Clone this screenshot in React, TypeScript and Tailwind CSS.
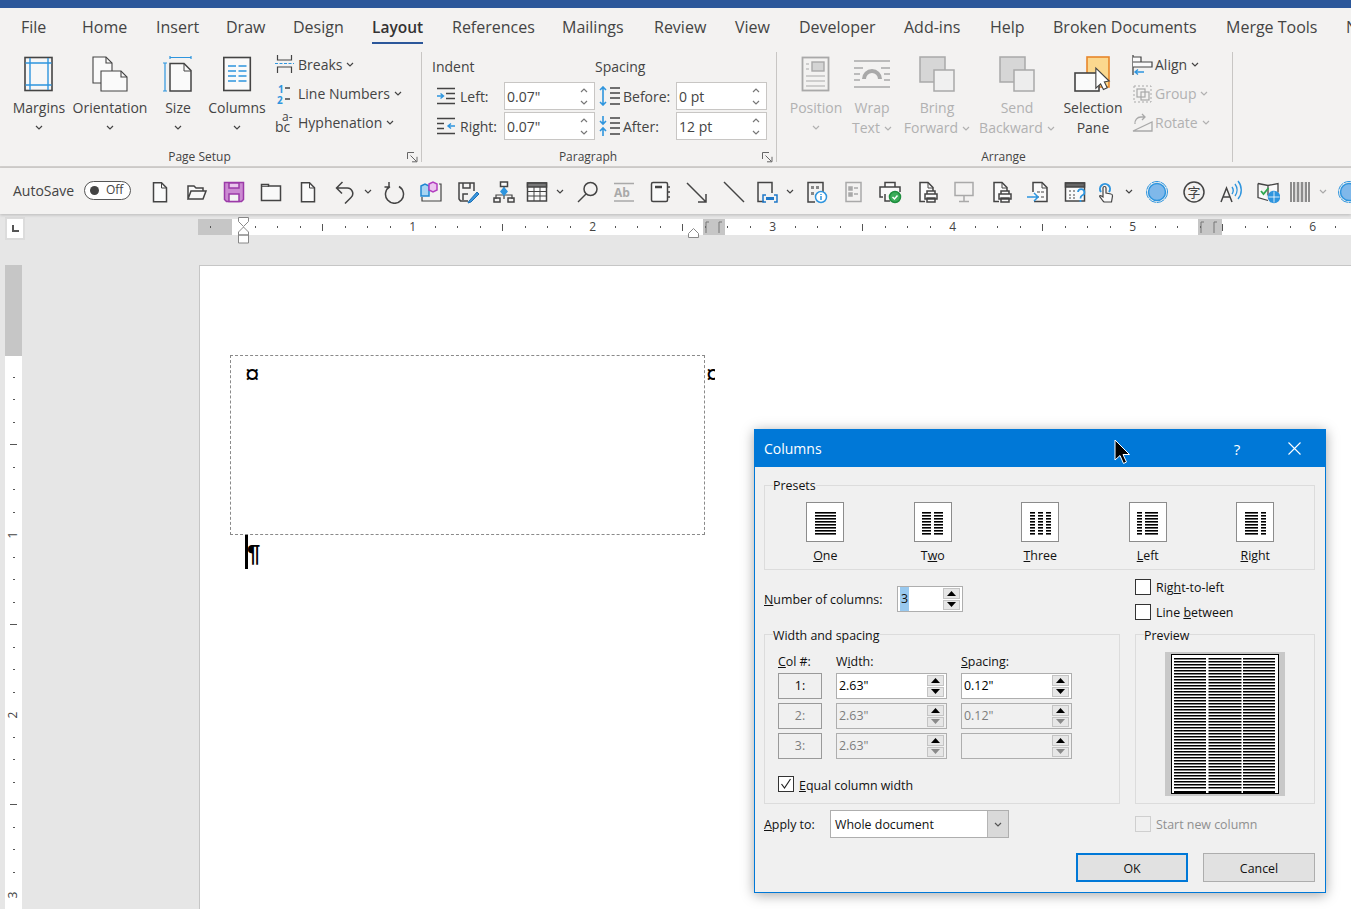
import React from "react";

const G = "#444444";
const B = "#2e95de";
const D = "#a9a9a9";

function Chev({c = G}: {c?: string}) {
  return (
    <svg width="8" height="5" viewBox="0 0 8 5" className="shrink-0">
      <path d="M1 1l3 3 3-3" fill="none" stroke={c} strokeWidth="1.2" />
    </svg>
  );
}

function Expander() {
  return (
    <svg width="11" height="11" viewBox="0 0 11 11" className="absolute right-[3px] bottom-[1px]">
      <path d="M.5 7V.5H7M3.5 3.5l6 6M5 9.8h5V4.8" fill="none" stroke="#666" />
    </svg>
  );
}

// ribbon big icons
const MarginsIcon = () => (
  <svg width="30" height="36" viewBox="0 0 30 36" fill="none">
    <rect x="1" y="1.5" width="27" height="33" fill="#f7f7f7" stroke={G} strokeWidth="1.6" />
    <path d="M6 2v32M24 2v32M1.5 7h26M1.5 29h26" stroke={B} strokeWidth="1.4" />
  </svg>
);
const OrientationIcon = () => (
  <svg width="36" height="36" viewBox="0 0 36 36" fill="none" stroke={G} strokeWidth="1.1">
    <path d="M1 1h13l6 6v20H1z" fill="#fafafa" />
    <path d="M14 1v6h6" />
    <path d="M9 15h20l6 6v14H9z" fill="#fafafa" />
    <path d="M29 15v6h6" />
  </svg>
);
const SizeIcon = () => (
  <svg width="30" height="36" viewBox="0 0 30 36" fill="none">
    <path d="M7 1.5h21M7 0v3M28 0v3M2 7v28M0 7h4M0 35h4" stroke={B} strokeWidth="1.2" />
    <path d="M7 7.5h14l7 7V35H7z" fill="#fafafa" stroke={G} strokeWidth="1.5" />
    <path d="M21 8v7h7" stroke={G} />
  </svg>
);
const ColumnsIcon = () => (
  <svg width="30" height="36" viewBox="0 0 30 36" fill="none">
    <rect x="1.8" y="1.5" width="26.5" height="33" fill="#fafafa" stroke={G} strokeWidth="1.6" />
    <path d="M6 10h8M16.5 10h8M6 15h8M16.5 15h8M6 20h8M16.5 20h8M6 25h8M16.5 25h8" stroke={B} strokeWidth="1.5" />
  </svg>
);
const BreaksIcon = () => (
  <svg width="19" height="19" viewBox="0 0 19 19" fill="none" stroke={G} strokeWidth="1.2">
    <path d="M2.5 0v5h14V0M2.5 18v-6h14v6" />
    <path d="M0 8.5h19" stroke={B} strokeDasharray="3 1.5" />
  </svg>
);
const LineNumbersIcon = () => (
  <svg width="19" height="24" viewBox="0 0 19 24" className="overflow-visible">
    <text x="3" y="11" fontSize="10" fontWeight="700" fill={B} fontFamily="'Open Sans',sans-serif">1</text>
    <text x="2" y="22" fontSize="10" fontWeight="700" fill={B} fontFamily="'Open Sans',sans-serif">2</text>
    <path d="M10 6h5M10 17h5" stroke={G} strokeWidth="1.3" />
  </svg>
);
const HyphenationIcon = () => (
  <svg width="19" height="24" viewBox="0 0 19 24" className="overflow-visible">
    <text x="7" y="10" fontSize="12" fill={G} fontFamily="'Open Sans',sans-serif">a-</text>
    <text x="0" y="21" fontSize="14" fill={G} fontFamily="'Open Sans',sans-serif">bc</text>
  </svg>
);
const PositionIcon = () => (
  <svg width="30" height="36" viewBox="0 0 30 36" fill="none" stroke={D}>
    <rect x="1.5" y="1.5" width="26" height="33" fill="#f3f2f1" strokeWidth="1.8" />
    <rect x="11" y="6" width="12" height="9" strokeWidth="1.4" fill="#d4d4d4" />
    <path d="M5 8h3M5 13h3M5 20h19M5 25h19M5 30h19" />
  </svg>
);
const WrapIcon = () => (
  <svg width="36" height="30" viewBox="0 0 36 30" fill="none" stroke={D}>
    <path d="M0 2h36M0 28h36M0 9h9M27 9h9M0 15h6M30 15h6M0 21h6M30 21h6" strokeWidth="1.3" />
    <path d="M10 20a8 8 0 0 1 16 0" strokeWidth="4" />
  </svg>
);
const StackIcon = ({back, front}: {back: string; front: string}) => (
  <svg width="36" height="36" viewBox="0 0 36 36" stroke={D} strokeWidth="1.5">
    <rect x="1" y="1" width="25" height="25" fill={back} />
    <rect x="15" y="14" width="20" height="21" fill={front} />
  </svg>
);
const SelectionIcon = () => (
  <svg width="38" height="36" viewBox="0 0 38 36">
    <rect x="13" y="1" width="22" height="30" fill="#fbd88e" stroke="#e8862a" strokeWidth="1.6" />
    <rect x="1" y="17" width="24" height="18" fill="#fafafa" stroke={G} strokeWidth="1.6" />
    <path d="M23 16v21l5-4.500 3 6 4-2-3-6 5-1z" fill="#fff" stroke={G} strokeWidth="1.2" transform="translate(0 -3) scale(.95)" />
  </svg>
);
const AlignIcon = () => (
  <svg width="21" height="20" viewBox="0 0 21 20" fill="none">
    <path d="M1 0v20" stroke={G} strokeWidth="1.3" />
    <path d="M1 2h8v5H1M1 7h19v5H1" stroke={G} fill="#fafafa" strokeWidth="1.2" />
    <path d="M3 17h9M6 14.500L3 17l3 2.500" stroke={B} strokeWidth="1.4" />
  </svg>
);
const GroupIcon = () => (
  <svg width="21" height="20" viewBox="0 0 21 20" fill="none" stroke={D}>
    <rect x="2" y="2" width="17" height="16" strokeDasharray="2 2" />
    <rect x="5" y="5" width="8" height="8" strokeWidth="1.2" />
    <rect x="9" y="8" width="8" height="8" strokeWidth="1.2" />
  </svg>
);
const RotateIcon = () => (
  <svg width="21" height="20" viewBox="0 0 21 20" fill="none" stroke={D} strokeWidth="1.3">
    <path d="M1 18h19V9zM3 11a6 6 0 0 1 6-7h4M10 1l3 3-3 3" />
  </svg>
);
const IndentIcon = ({flip}: {flip?: boolean}) => (
  <svg width="18" height="18" viewBox="0 0 18 18" fill="none">
    {flip
      ? <path d="M0 1.500h18M0 6.500h7M0 11.500h7M0 16.500h18" stroke={G} strokeWidth="1.5" />
      : <path d="M0 1.500h18M9 6.500h9M9 11.500h9M0 16.500h18" stroke={G} strokeWidth="1.5" />}
    {flip
      ? <path d="M11 9h7M14 6.500L11 9l3 2.500" stroke={B} strokeWidth="1.400" />
      : <path d="M0 9h6M3.500 6.500L6.500 9l-3 2.500" stroke={B} strokeWidth="1.400" />}
  </svg>
);
const SpacingIcon = ({after}: {after?: boolean}) => (
  <svg width="22" height="20" viewBox="0 0 22 20" fill="none">
    <path d="M12 2h10M12 7h10M12 12h10M12 18h10" stroke={G} strokeWidth="1.500" />
    {after
      ? <path d="M5 0v8M2 5l3 3 3-3M5 12v8M2 15l3-3 3 3" stroke={B} strokeWidth="1.600" />
      : <path d="M5 1v18M2 4l3-3 3 3M2 16l3 3 3-3" stroke={B} strokeWidth="1.600" />}
  </svg>
);

// quick access toolbar icons
const Q = ({children, s = G}: {children: React.ReactNode; s?: string}) => (
  <svg width="24" height="24" viewBox="0 0 24 24" fill="none" stroke={s} strokeWidth="1.5">{children}</svg>
);
const Page = ({s = G}: {s?: string}) => (
  <>
    <path d="M5.500 2.800h8l5 5v14h-13z" fill="#fafafa" stroke={s} />
    <path d="M13.500 3v5h5" stroke={s} strokeWidth="1" />
  </>
);
const qatItems: {icon: React.ReactNode; cn?: string; chev?: string}[] = [
  {icon: <Q><Page /></Q>},
  {icon: <Q><path d="M3 19V6h6l2 2h7v3M3 19l3-8h15l-3 8z" fill="#fafafa" /></Q>},
  {icon: <Q s="#9b3aa8"><path d="M2.500 2.500h19v17l-2 2h-15l-2-2z" fill="#cb8ad2" /><rect x="7" y="3" width="10" height="5" fill="#e9c7ed" /><rect x="7" y="14" width="10" height="7.500" fill="#f4f4f4" /></Q>},
  {icon: <Q><path d="M2.500 20.500V4.500h7v1.500h12v14.500z" fill="#f9f9f9" /><path d="M3 6.300h7" strokeWidth="1" /></Q>},
  {icon: <Q><Page /></Q>},
  {icon: <Q><path d="M4 8h10a5.500 5.500 0 0 1 4 9.500l-6 6M9.500 2L3.500 8l5.500 5.500" /></Q>, chev: "w-[12px]"},
  {icon: <Q><path d="M8 5.500a9 9 0 1 0 9 0M7 1v5H2.500" transform="translate(0 1)" /></Q>},
  {icon: <Q><path d="M20 4h2v17H3v-4" strokeWidth="1.200" /><path d="M2 6l4-2 4 2v10H2z" fill="#a8d4f2" stroke="#1f86d2" /><path d="M10 4l4-2 4 2v6l-4 2-4-2z" fill="#ecc4ef" stroke="#b33fc0" /></Q>},
  {icon: <Q><path d="M12 21H4.500L3 19V3h15v8M7 3v5h7V3M7 20v-6h5" /><path d="M13 21l8-9 2 2-8 8-3 1z" fill="#3a96dd" stroke="#1b6fb5" strokeWidth="1" /></Q>},
  {icon: <Q><rect x="8.500" y="2" width="7" height="4.500" fill="#fafafa" /><path d="M12 7v3M4 19v-4h16v4M12 14v5" strokeWidth="1.200" /><rect x="2" y="18" width="6" height="4" /><rect x="16" y="18" width="6" height="4" /><path d="M12 8l3 3.500-3 3.500-3-3.500z" fill={B} stroke={B} /></Q>, cn: "-ml-[1px]"},
  {icon: <Q><rect x="2.500" y="3" width="19" height="18" fill="#fafafa" /><path d="M2.500 3h19v4h-19z" fill="#777" /><path d="M9 7v14M15 7v14M3 11.500h18M3 16h18" strokeWidth="1" /></Q>, cn: "-ml-[4px]", chev: "w-[14px]"},
  {icon: <Q><circle cx="14.500" cy="9" r="6.500" /><path d="M10 14l-8 8" /></Q>},
  {icon: <Q s={D}><path d="M2 3.500h20M2 21h20" /><text x="2" y="17" fontSize="12" fontWeight="700" fill={D} stroke="none" fontFamily="'Open Sans',sans-serif">Ab</text></Q>, cn: "-ml-[1px]"},
  {icon: <Q><rect x="3.500" y="2.500" width="16" height="19" rx="1.500" fill="#fafafa" /><path d="M7 7h7" strokeWidth="2.500" /><path d="M21 6v2M21 11v2M21 16v2" /></Q>, cn: "-ml-[1px]"},
  {icon: <Q><path d="M2 3l19 19M21 14v8h-8" /></Q>},
  {icon: <Q><path d="M2 2l20 20" /></Q>},
  {icon: <Q><path d="M9 21.500H3V2.500h14V13" /><path d="M11 15H8v7h3M19 15h3v7h-3" stroke="#1f78c8" /><rect x="11" y="17" width="8" height="3" fill="#1f78c8" stroke="none" /></Q>, cn: "-ml-[4px]", chev: "w-[12px]"},
  {icon: <Q><path d="M11 22H4V2.500h15V12" /><path d="M7 6h3v3H7zM7 12h3v3H7zM12 6h3v3h-3z" fill="#888" stroke="none" /><circle cx="17" cy="17" r="5.500" fill="#fff" stroke={B} /><path d="M17 14v1M17 16v4" stroke={B} /></Q>},
  {icon: <Q s={D}><rect x="5" y="2.500" width="15" height="19" /><path d="M8 7h3v3H8zM8 13h3v3H8zM13 8h4M13 14h4" fill={D} /></Q>},
  {icon: <Q><path d="M7 7V2.500h10V7M5 17H2V7h20v5M7 14v7h5" fill="#fafafa" /><circle cx="17" cy="17" r="5.500" fill="#3bad5a" stroke="#1e8e3e" /><path d="M14.500 17l2 2 3-3.500" stroke="#fff" /></Q>},
  {icon: <Q><path d="M10 21.500H5v-19h8l5 5v4" fill="#fafafa" /><path d="M13 3v5h5" strokeWidth="1" /><path d="M12 14v-3h8v3M10 14h12v5H10zM12 18h8v4h-8z" fill="#fafafa" /></Q>},
  {icon: <Q s={D}><rect x="3" y="2.500" width="18" height="13" /><path d="M12 16v5M7 21.500h10" /></Q>},
  {icon: <Q><path d="M10 21.500H5v-19h8l5 5v4" fill="#fafafa" /><path d="M13 3v5h5" strokeWidth="1" /><path d="M12 14v-3h8v3M10 14h12v5H10zM12 18h8v4h-8z" fill="#fafafa" /></Q>},
  {icon: <Q><path d="M7 12V2.500h9l5 5v14H8" fill="#fafafa" /><path d="M16 3v5h5" strokeWidth="1" /><path d="M11 12h3M15 12h3M11 17h2M15 17h3" strokeWidth="1.200" /><path d="M1 17h11M8 13l4 4-4 4" stroke={B} /></Q>},
  {icon: <Q><rect x="2.500" y="3" width="19" height="18" fill="#fafafa" /><path d="M2.500 3h19v4h-19z" fill="#666" /><path d="M6 11h2M10 11h2M6 15h2M10 15h2M6 18h2M10 18h2" strokeWidth="1.200" /><path d="M15 12a3.200 3.200 0 1 1 4 3.500c-1 .5-1.500 1-1.500 3M17.500 20v2" stroke={B} fill="#fafafa" strokeWidth="1.800" /></Q>},
  {icon: <Q><path d="M7 12a5 5 0 1 1 8 0" stroke={B} strokeWidth="2" /><path d="M9 21l-3-4c-1-1 0-2 1.500-1l1.500 1V8c0-2 3-2 3 0v5l5 1c1 0 1.500 1 1.500 2l-1 6H10z" fill="#fafafa" strokeWidth="1.200" /></Q>, chev: "w-[14px]", cn: "-ml-[6px]"},
  {icon: <Q s={B}><circle cx="12" cy="12" r="10.500" strokeWidth="1" strokeDasharray="8 .8" /><circle cx="12" cy="12" r="8.500" fill="#7fb8ea" strokeWidth="1.500" /></Q>},
  {icon: <svg width="24" height="24" viewBox="0 0 24 24" fill="none"><circle cx="12" cy="12" r="10" stroke={G} strokeWidth="1.500" /><text x="12" y="17" fontSize="13" textAnchor="middle" fill={G} fontFamily="'Noto Sans CJK SC',sans-serif">字</text></svg>},
  {icon: <Q><path d="M2 22l5.500-14L13 22M4 17h7" /><path d="M14 7a6 6 0 0 1 0 7M17 4a10 10 0 0 1 0 12M20 1a14 14 0 0 1 0 18" stroke={B} strokeWidth="1.400" transform="translate(-1 0)" /></Q>},
  {icon: <Q><path d="M2 3.500l10 2 10-2v9M12 5.500v10M2 3.500v14l10 3" fill="#fafafa" strokeWidth="1.300" /><path d="M5 11l2.500 3 5-6" stroke="#2fa84f" strokeWidth="1.800" /><circle cx="18" cy="17" r="5.500" fill={B} stroke={B} /><path d="M12.500 17h11M18 11.500v11" stroke="#fff" strokeWidth=".8" /></Q>},
  {icon: <Q s="#8c8c8c"><path d="M3 2v20M6 2v20M10 2v20M14 2v20M18 2v20M21 2v20" strokeWidth="2" /><path d="M8 2v20M12 2v20M16 2v20" strokeWidth="1" stroke="#bbb" /></Q>, chev: "w-[12px]", cn: "-ml-[5px]"},
  {icon: <Q s={B}><circle cx="12" cy="12" r="10.500" strokeWidth="1" strokeDasharray="8 .8" /><circle cx="12" cy="12" r="8.500" fill="#7fb8ea" strokeWidth="1.500" /></Q>},
];

const tabs: [string, string][] = [
  ["File", "w-[61px]"], ["Home", "w-[74px]"], ["Insert", "w-[70px]"], ["Draw", "w-[67px]"], ["Design", "w-[79px]"],
  ["Layout", "w-[80px]"], ["References", "w-[110px]"], ["Mailings", "w-[92px]"], ["Review", "w-[81px]"], ["View", "w-[64px]"],
  ["Developer", "w-[105px]"], ["Add-ins", "w-[86px]"], ["Help", "w-[63px]"], ["Broken Documents", "w-[173px]"], ["Merge Tools", "w-[120px]"], ["N", "w-[20px]"],
];

function BigButton({icon, lines, cn, off, chevInline}: {icon: React.ReactNode; lines: string[]; cn: string; off?: boolean; chevInline?: boolean}) {
  const c = off ? "#b1b1b1" : G;
  return (
    <div className={`flex flex-col items-center text-[14px] leading-5 ${off ? "text-[#b1b1b1]" : "text-[#444]"} ${cn}`}>
      <div className="h-[36px] mb-[6px] flex items-center justify-center">{icon}</div>
      {lines.map((l, i) => (
        <div key={l} className="whitespace-nowrap flex items-center gap-[4px]">
          {l}
          {chevInline && i === lines.length - 1 && <Chev c={c} />}
        </div>
      ))}
      {lines.length === 1 && <div className="h-[19px] flex items-center"><Chev c={c} /></div>}
    </div>
  );
}

function SmallRow({icon, label, off}: {icon: React.ReactNode; label: string; off?: boolean}) {
  return (
    <div className={`h-[29px] flex items-center text-[14px] whitespace-nowrap ${off ? "text-[#b1b1b1]" : "text-[#444]"}`}>
      <div className="w-[21px] flex items-center justify-start mr-[2px]">{icon}</div>
      {label}
      <span className="ml-[4px]"><Chev c={off ? "#b1b1b1" : G} /></span>
    </div>
  );
}

function RibbonInput({value}: {value: string}) {
  return (
    <div className="w-[91px] h-[28px] border border-[#c8c6c4] bg-white flex items-center pl-[2px] pr-[6px] text-[14px] text-[#444]">
      <span className="flex-1">{value}</span>
      <div className="flex flex-col gap-[7px]">
        <span className="rotate-180 flex"><Chev c="#777" /></span>
        <Chev c="#777" />
      </div>
    </div>
  );
}

function Ruler() {
  const ticks = Array.from({length: 52}, (_, i) => i - 1);
  return (
    <div className="relative h-[16px] mt-[5px] flex-1 bg-white overflow-visible">
      <div className="absolute left-0 top-0 h-[16px] w-[34px] bg-[#c6c6c6]" />
      <div className="absolute left-[505px] top-0 h-[16px] w-[22px] bg-[#c6c6c6]" />
      <div className="absolute left-[1000px] top-0 h-[16px] w-[24px] bg-[#c6c6c6]" />
      <div className="absolute left-[1px] top-0 h-[16px] flex items-center text-[12px] text-[#444] leading-none">
        {ticks.map(k => (
          <div key={k} className="w-[22.5px] shrink-0 flex items-center justify-center">
            {k === 0 ? null : k % 8 === 0 ? <span>{k / 8}</span> : k % 4 === 0 ? <div className="w-px h-[7px] bg-[#555]" /> : <div className="w-px h-[2px] bg-[#555]" />}
          </div>
        ))}
      </div>
      {/* indent markers */}
      <svg width="13" height="29" viewBox="0 0 13 29" className="absolute left-[39px] -top-[2px]" fill="#fff" stroke="#888">
        <path d="M1.500.5h10v4l-5 5-5-5zM6.500 10l5 5v3h-10v-3zM1.500 18h10v8h-10z" />
      </svg>
      <svg width="13" height="11" viewBox="0 0 13 11" className="absolute left-[489px] top-[9px]" fill="#fff" stroke="#888">
        <path d="M6.500.5l5 5v4h-10v-4z" />
      </svg>
      <svg width="20" height="12" viewBox="0 0 20 12" className="absolute left-[507px] top-[2px]" fill="none" stroke="#777">
        <path d="M1 12V1h3M14 12V1h3" />
      </svg>
      <svg width="20" height="12" viewBox="0 0 20 12" className="absolute left-[1002px] top-[2px]" fill="none" stroke="#777">
        <path d="M1 12V1h3M14 12V1h3" />
      </svg>
    </div>
  );
}

function VRuler() {
  const ticks = Array.from({length: 25}, (_, i) => i + 1);
  return (
    <div className="ml-[5px] w-[17px] h-full flex flex-col bg-white overflow-hidden">
      <div className="h-[91px] shrink-0 bg-[#c6c6c6]" />
      <div className="h-[10px] shrink-0" />
      {ticks.map(k => (
        <div key={k} className="h-[22.5px] shrink-0 flex items-center justify-center text-[12px] text-[#444] leading-none">
          {k % 8 === 0 ? <span className="-rotate-90">{k / 8}</span> : k % 4 === 0 ? <div className="w-[7px] h-px bg-[#555]" /> : <div className="w-[2px] h-px bg-[#555]" />}
        </div>
      ))}
    </div>
  );
}

const Tri = ({down, c = "#000"}: {down?: boolean; c?: string}) => (
  <svg width="9" height="5" viewBox="0 0 9 5"><path d={down ? "M0 0h9L4.500 5z" : "M4.500 0L9 5H0z"} fill={c} /></svg>
);

function SpinButtons({dim}: {dim?: boolean}) {
  return (
    <div className="w-[20px] h-full flex flex-col gap-[1px] py-[1px] pl-[1px] pr-[2px] shrink-0">
      <div className="flex-1 bg-[#e6e6e6] border border-[#c4c4c4] flex items-center justify-center"><Tri /></div>
      <div className="flex-1 bg-[#e6e6e6] border border-[#c4c4c4] flex items-center justify-center"><Tri down c={dim ? "#8a8a8a" : "#000"} /></div>
    </div>
  );
}

function DlgSpin({value, off}: {value: string; off?: boolean}) {
  return (
    <div className={`h-[26px] w-[111px] border border-[#aeaeae] flex items-stretch ${off ? "bg-[#f0f0f0]" : "bg-white"}`}>
      <span className={`flex-1 pl-[2px] flex items-center ${off ? "text-[#7d7d7d]" : "text-black"}`}>{value}</span>
      <SpinButtons dim={off} />
    </div>
  );
}

function ColBtn({n, off}: {n: string; off?: boolean}) {
  return <div className={`h-[26px] border border-[#9a9a9a] bg-[#f0f0f0] flex items-center justify-center ${off ? "text-[#7d7d7d]" : "text-black"}`}>{n}</div>;
}

function Check({checked, off}: {checked?: boolean; off?: boolean}) {
  return (
    <div className={`w-[16px] h-[16px] border flex items-center justify-center shrink-0 ${off ? "border-[#cfcfcf] bg-[#f0f0f0]" : "border-[#333] bg-white"}`}>
      {checked && <svg width="12" height="12" viewBox="0 0 12 12" fill="none" stroke="#222" strokeWidth="1.200"><path d="M1.500 6l3 4 6-9" /></svg>}
    </div>
  );
}

function PresetLines({cols}: {cols: [number, number][]}) {
  const ys = Array.from({length: 8}, (_, i) => i * 3);
  return (
    <svg width="21" height="23" viewBox="0 0 21 23">
      {ys.map(y => cols.map(([x, w]) => <rect key={`${x}-${y}`} x={x} y={y} width={w} height="1.600" fill="#000" />))}
    </svg>
  );
}

const presets: {cols: [number, number][]; pre: string; u: string; post: string}[] = [
  {cols: [[0, 21]], pre: "", u: "O", post: "ne"},
  {cols: [[0, 9], [12, 9]], pre: "T", u: "w", post: "o"},
  {cols: [[0, 5], [8, 5], [16, 5]], pre: "", u: "T", post: "hree"},
  {cols: [[0, 5], [8, 13]], pre: "", u: "L", post: "eft"},
  {cols: [[0, 13], [16, 5]], pre: "", u: "R", post: "ight"},
];

function PreviewDoc() {
  const ys = Array.from({length: 44}, (_, i) => 6 + i * 3);
  return (
    <svg width="120" height="144" viewBox="0 0 120 144">
      <rect width="120" height="144" fill="#c8c8c8" />
      <rect x="6.500" y="2.500" width="107" height="139" fill="#fff" stroke="#000" />
      {ys.map(y => (
        <g key={y} fill="#000">
          <rect x="9" y={y} width="32" height="1.500" />
          <rect x="43.500" y={y} width="33" height="1.500" />
          <rect x="78" y={y} width="32" height="1.500" />
        </g>
      ))}
      <rect x="9" y="139" width="32" height="2" />
      <rect x="43.500" y="139" width="33" height="2" />
      <rect x="78" y="139" width="32" height="2" />
    </svg>
  );
}

function ColumnsDialog() {
  return (
    <div className="absolute left-[754px] top-[429px] w-[572px] h-[464px] bg-[#f0f0f0] border border-[#0078d7] shadow-[0_2px_12px_rgba(0,0,0,0.35)] text-[12.4px] leading-4 text-[#111] font-['Open_Sans',sans-serif]">
      <div className="h-[37px] bg-[#0078d7] flex items-center pl-[9px] text-white text-[14px]">
        <span className="flex-1">Columns</span>
        <span className="w-[20px] text-center mr-[41px] text-[15px]">?</span>
        <svg width="13" height="13" viewBox="0 0 13 13" className="mr-[24px]" stroke="#fff" strokeWidth="1.100"><path d="M.5.5l12 12M12.500.5l-12 12" /></svg>
      </div>
      <div className="pl-[9px] pr-[10px] pt-[10px]">
        <fieldset className="h-[93px] border border-[#dcdcdc]">
          <legend className="ml-[8px] h-[16px] leading-[18px]">Presets</legend>
          <div className="flex pl-[6.500px] pt-[9px]">
            {presets.map(p => (
              <div key={p.u + p.post} className="w-[107.5px] flex flex-col items-center">
                <div className="w-[38px] h-[40px] bg-white border border-[#8c8c8c] flex items-center justify-center pt-[2px]">
                  <PresetLines cols={p.cols} />
                </div>
                <div className="mt-[6px]">{p.pre}<u>{p.u}</u>{p.post}</div>
              </div>
            ))}
          </div>
        </fieldset>
        <div className="flex">
          <div className="w-[356px] shrink-0">
            <div className="mt-[16px] flex items-center h-[26px]">
              <div className="w-[133px] mt-[2px]"><u>N</u>umber of columns:</div>
              <div className="w-[66px] h-[26px] border border-[#aeaeae] bg-white flex items-stretch">
                <div className="flex-1 flex pl-[2px]"><span className="bg-[#99c9ef] px-px flex items-center">3</span></div>
                <SpinButtons />
              </div>
            </div>
            <fieldset className="mt-[14px] h-[178px] border border-[#dcdcdc]">
              <legend className="ml-[8px] h-[16px] leading-[20px]">Width and spacing</legend>
              <div className="pl-[13px] pt-[11px]">
                <div className="grid grid-cols-[44px_111px_111px] gap-x-[14px] gap-y-[4px]">
                  <div className="h-[16px] leading-[18px]"><u>C</u>ol #:</div>
                  <div className="h-[16px] leading-[18px]">W<u>i</u>dth:</div>
                  <div className="h-[16px] leading-[18px]"><u>S</u>pacing:</div>
                  <ColBtn n="1:" />
                  <DlgSpin value={'2.63"'} />
                  <DlgSpin value={'0.12"'} />
                  <ColBtn n="2:" off />
                  <DlgSpin value={'2.63"'} off />
                  <DlgSpin value={'0.12"'} off />
                  <ColBtn n="3:" off />
                  <DlgSpin value={'2.63"'} off />
                  <DlgSpin value="" off />
                </div>
                <div className="mt-[17px] flex items-center gap-[5px] h-[16px]">
                  <Check checked />
                  <span className="mt-[4px]"><u>E</u>qual column width</span>
                </div>
              </div>
            </fieldset>
            <div className="mt-[6px] flex items-center h-[28px]">
              <div className="w-[66px] mt-[2px]"><u>A</u>pply to:</div>
              <div className="w-[179px] h-[28px] border border-[#aeaeae] bg-white flex items-stretch">
                <span className="flex-1 pl-[4px] pt-[2px] flex items-center">Whole document</span>
                <div className="w-[21px] bg-[#d9d9d9] border-l border-[#b5b5b5] flex items-center justify-center"><Chev c="#555" /></div>
              </div>
            </div>
          </div>
          <div className="ml-[15px] w-[180px] shrink-0">
            <div className="mt-[9px] flex items-center gap-[5px] h-[16px]"><Check /><span className="mt-[2px]">Rig<u>h</u>t-to-left</span></div>
            <div className="mt-[9px] flex items-center gap-[5px] h-[16px]"><Check /><span className="mt-[2px]">Line <u>b</u>etween</span></div>
            <fieldset className="mt-[6px] h-[178px] border border-[#dcdcdc]">
              <legend className="ml-[8px] h-[16px] leading-[20px]">Preview</legend>
              <div className="pl-[29px] pt-[10px]"><PreviewDoc /></div>
            </fieldset>
            <div className="mt-[12px] flex items-center gap-[5px] h-[16px] text-[#8f8f8f]"><Check off /><span className="mt-[2px]">Start new column</span></div>
          </div>
        </div>
        <div className="mt-[15px] flex justify-end gap-[15px]">
          <div className="w-[112px] h-[29px] border-2 border-[#0078d7] bg-[#e1e1e1] pt-[2px] flex items-center justify-center">OK</div>
          <div className="w-[112px] h-[29px] border border-[#adadad] bg-[#e1e1e1] pt-[2px] flex items-center justify-center">Cancel</div>
        </div>
      </div>
      <svg width="16" height="26" viewBox="0 0 16 26" className="absolute left-[359px] top-[9px]">
        <path d="M1 1v20l5-4.500 3.500 8 3-1.500-3.500-7.500h6.500z" fill="#000" stroke="#fff" />
      </svg>
    </div>
  );
}

export default function App() {
  return (
    <div className="relative w-[1351px] h-[909px] overflow-hidden flex flex-col bg-[#e6e6e6] font-['Open_Sans',sans-serif]">
      <div className="h-[8px] bg-[#2b579a] shrink-0" />
      {/* tabs */}
      <div className="h-[36px] shrink-0 bg-[#f3f2f1] flex pl-[21px] text-[16px] text-[#444] overflow-hidden">
        {tabs.map(([t, w]) => (
          <div key={t} className={`${w} shrink-0 pt-[7px] whitespace-nowrap`}>
            {t === "Layout"
              ? <span className="inline-block h-[29px] border-b-[3px] border-[#2b579a] font-semibold text-[#333] text-[15.500px]">{t}</span>
              : t}
          </div>
        ))}
      </div>
      {/* ribbon */}
      <div className="h-[124px] shrink-0 bg-[#f3f2f1] border-b-2 border-[#d2d0ce] flex pt-[6px]">
        <div className="relative w-[421px] h-[114px] flex flex-col">
          <div className="h-[98px] flex pl-[12px] pt-[6px]">
            <BigButton icon={<MarginsIcon />} lines={["Margins"]} cn="w-[54px]" />
            <BigButton icon={<OrientationIcon />} lines={["Orientation"]} cn="w-[88px]" />
            <BigButton icon={<SizeIcon />} lines={["Size"]} cn="w-[48px]" />
            <BigButton icon={<ColumnsIcon />} lines={["Columns"]} cn="w-[70px]" />
            <div className="ml-[3px] -mt-[6px]">
              <SmallRow icon={<BreaksIcon />} label="Breaks" />
              <SmallRow icon={<LineNumbersIcon />} label="Line Numbers" />
              <SmallRow icon={<HyphenationIcon />} label="Hyphenation" />
            </div>
          </div>
          <div className="h-[16px] text-center text-[12px] leading-[18px] text-[#444] pr-[22px]">Page Setup</div>
          <Expander />
        </div>
        <div className="w-px h-[110px] mt-[2px] bg-[#c8c6c4]" />
        <div className="relative w-[354px] h-[114px] flex flex-col">
          <div className="h-[98px] flex text-[14px] text-[#444]">
            <div className="w-[173px] shrink-0">
              <div className="h-[31px] pt-[7px] pl-[10px] leading-5">Indent</div>
              <div className="flex items-center h-[30px]">
                <div className="ml-[15px] w-[18px] flex"><IndentIcon /></div>
                <div className="ml-[5px] w-[44px]">Left:</div>
                <RibbonInput value={'0.07"'} />
              </div>
              <div className="flex items-center h-[30px]">
                <div className="ml-[15px] w-[18px] flex"><IndentIcon flip /></div>
                <div className="ml-[5px] w-[44px]">Right:</div>
                <RibbonInput value={'0.07"'} />
              </div>
            </div>
            <div className="flex-1">
              <div className="h-[31px] pt-[7px] leading-5">Spacing</div>
              <div className="flex items-center h-[30px]">
                <div className="ml-[3px] w-[22px] flex"><SpacingIcon /></div>
                <div className="ml-[3px] w-[53px]">Before:</div>
                <RibbonInput value="0 pt" />
              </div>
              <div className="flex items-center h-[30px]">
                <div className="ml-[3px] w-[22px] flex"><SpacingIcon after /></div>
                <div className="ml-[3px] w-[53px]">After:</div>
                <RibbonInput value="12 pt" />
              </div>
            </div>
          </div>
          <div className="h-[16px] text-center text-[12px] leading-[18px] text-[#444] pr-[22px]">Paragraph</div>
          <Expander />
        </div>
        <div className="w-px h-[110px] mt-[2px] bg-[#c8c6c4]" />
        <div className="w-[455px] h-[114px] flex flex-col">
          <div className="h-[98px] flex pl-[9px] pt-[6px]">
            <BigButton icon={<PositionIcon />} lines={["Position"]} cn="w-[60px]" off />
            <BigButton icon={<WrapIcon />} lines={["Wrap", "Text"]} cn="w-[52px]" off chevInline />
            <BigButton icon={<StackIcon back="#d6d6d6" front="#f0f0f0" />} lines={["Bring", "Forward"]} cn="w-[78px]" off chevInline />
            <BigButton icon={<StackIcon back="#d6d6d6" front="#ededed" />} lines={["Send", "Backward"]} cn="w-[82px]" off chevInline />
            <BigButton icon={<SelectionIcon />} lines={["Selection", "Pane"]} cn="w-[70px]" />
            <div className="ml-[4px] -mt-[6px]">
              <SmallRow icon={<AlignIcon />} label="Align" />
              <SmallRow icon={<GroupIcon />} label="Group" off />
              <SmallRow icon={<RotateIcon />} label="Rotate" off />
            </div>
          </div>
          <div className="h-[16px] text-center text-[12px] leading-[18px] text-[#444] pr-[2px]">Arrange</div>
        </div>
        <div className="w-px h-[110px] mt-[2px] bg-[#c8c6c4]" />
      </div>
      {/* quick access toolbar */}
      <div className="h-[46px] shrink-0 bg-[#f3f2f1] flex items-center pl-[13px] text-[14px] text-[#444] shadow-[0_1px_3px_rgba(0,0,0,0.2)] z-10 overflow-hidden">
        <span className="w-[71px] shrink-0 mb-[2px]">AutoSave</span>
        <div className="w-[47px] h-[19px] shrink-0 mb-[2px] rounded-full border border-[#555] bg-white flex items-center pl-[5px] gap-[7px] text-[12px]">
          <div className="w-[9px] h-[9px] rounded-full bg-[#444]" />
          <span className="leading-none">Off</span>
        </div>
        <div className="w-[10.500px] shrink-0" />
        {qatItems.map((it, i) => (
          <React.Fragment key={i}>
            <div className={`w-[37px] shrink-0 flex justify-center mt-[2px] ${it.cn ?? ""}`}>{it.icon}</div>
            {it.chev && <div className={`${it.chev} shrink-0 flex`}><Chev c={i === 30 ? D : G} /></div>}
          </React.Fragment>
        ))}
      </div>
      {/* horizontal ruler */}
      <div className="h-[51px] shrink-0 flex relative">
        <div className="w-[198px] shrink-0 pt-[3px] pl-[5px]">
          <div className="w-[20px] h-[23px] bg-white border-2 border-[#dcdcdc] flex items-center justify-center">
            <div className="w-[7px] h-[7px] border-l-2 border-b-2 border-[#555]" />
          </div>
        </div>
        <Ruler />
      </div>
      {/* document */}
      <div className="flex-1 flex min-h-0">
        <div className="w-[199px] shrink-0 h-full"><VRuler /></div>
        <div className="flex-1 bg-white border-l border-t border-[#c6c6c6] pl-[30px] pt-[89px]">
          <div className="relative w-[475px] h-[180px] border border-dashed border-[#8a8a8a] pl-[14px] pt-[6px]">
            <span className="block font-['Liberation_Sans',sans-serif] text-[26px] leading-[24px] text-black">¤</span>
            <span className="absolute left-[475px] top-[6px] w-[9px] overflow-hidden font-['Liberation_Sans',sans-serif] text-[26px] leading-[24px] text-black">¤</span>
          </div>
          <div className="ml-[15px] flex items-start h-[34px]">
            <div className="w-[3px] h-[34px] bg-black" />
            <span className="font-['Liberation_Sans',sans-serif] font-bold text-[24px] leading-[28px] mt-[5px] -ml-px text-black">¶</span>
          </div>
        </div>
      </div>
      <ColumnsDialog />
    </div>
  );
}
